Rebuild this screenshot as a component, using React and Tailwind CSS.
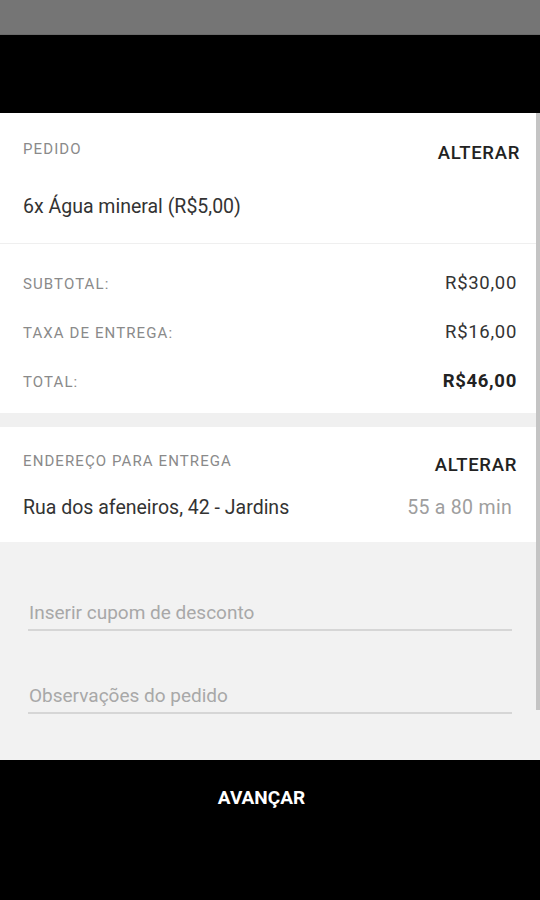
import React from "react";

const font = { fontFamily: "Roboto, 'Noto Sans', sans-serif" };

function Row({ label, value, bold }) {
  return (
    <div className="flex h-[49px] items-center justify-between">
      <span className="mt-[3px] text-[15px] leading-[20px] tracking-[1.1px] text-[#8a8a8a]">{label}</span>
      <span className={`text-[18.5px] leading-[22px] tracking-[0.7px] ${bold ? "font-bold text-[#222]" : "text-[#333]"}`}>{value}</span>
    </div>
  );
}

export default function App() {
  return (
    <div className="flex h-[900px] w-[540px] flex-col bg-black" style={font}>
      <div className="h-[35px] bg-[#757575] border-b border-[#6a6a6a]" />
      <div className="h-[78px] bg-black" />
      <div className="relative flex flex-col">
        <div className="absolute right-0 top-0 h-[597px] w-[4px] bg-[#c4c4c4]" />
        {/* Pedido */}
        <div className="bg-white px-[23px] pb-[24px] border-b border-[#efefef]">
          <div className="flex items-start justify-between">
            <span className="mt-[26px] text-[15px] leading-[20px] tracking-[1.1px] text-[#8a8a8a]">PEDIDO</span>
            <span className="mt-[30px] mr-[-3px] text-[18.5px] leading-[20px] tracking-[0.7px] font-medium text-[#222]">ALTERAR</span>
          </div>
          <div className="mt-[32px] text-[19.5px] leading-[24px] text-[#333]">6x Água mineral (R$5,00)</div>
        </div>
        {/* Totals */}
        <div className="bg-white px-[23px] pt-[14px] pb-[8px]">
          <Row label="SUBTOTAL:" value="R$30,00" />
          <Row label="TAXA DE ENTREGA:" value="R$16,00" />
          <Row label="TOTAL:" value="R$46,00" bold />
        </div>
        <div className="h-[14px] bg-[#f0f0f0]" />
        {/* Address */}
        <div className="bg-white px-[23px] pb-[22px]">
          <div className="flex items-start justify-between">
            <span className="mt-[24px] text-[15px] leading-[20px] tracking-[1.1px] text-[#8a8a8a]">ENDEREÇO PARA ENTREGA</span>
            <span className="mt-[28px] text-[18.5px] leading-[20px] tracking-[0.7px] font-medium text-[#222]">ALTERAR</span>
          </div>
          <div className="mt-[21px] flex h-[24px] items-center justify-between">
            <span className="text-[19.5px] leading-[24px] text-[#333]">Rua dos afeneiros, 42 - Jardins</span>
            <span className="mr-[5px] text-[19.5px] leading-[24px] tracking-[0.3px] text-[#9e9e9e]">55 a 80 min</span>
          </div>
        </div>
        {/* Inputs */}
        <div className="flex h-[218px] flex-col bg-[#f2f2f2] pl-[28px] pr-[28px] pt-[53px]">
          <input
            placeholder="Inserir cupom de desconto"
            className="h-[36px] w-full border-b-[2px] border-[#d6d6d6] bg-transparent px-[1px] text-[19px] text-[#333] outline-none placeholder:text-[#a8a8a8]"
            style={font}
          />
          <input
            placeholder="Observações do pedido"
            className="mt-[47px] h-[36px] w-full border-b-[2px] border-[#d6d6d6] bg-transparent px-[1px] text-[19px] text-[#333] outline-none placeholder:text-[#a8a8a8]"
            style={font}
          />
        </div>
      </div>
      <div className="flex flex-1 justify-center bg-black pr-[17px] pt-[26px]">
        <span className="text-[19px] leading-[24px] font-bold text-white">AVANÇAR</span>
      </div>
    </div>
  );
}
